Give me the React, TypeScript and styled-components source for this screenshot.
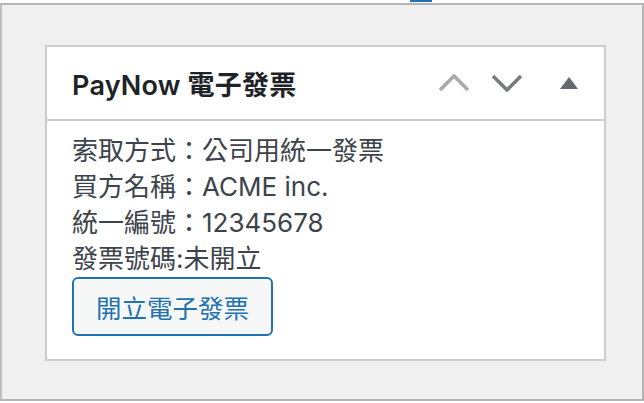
import React from 'react';
import styled, { createGlobalStyle } from 'styled-components';

const GlobalStyle = createGlobalStyle`
	body {
		margin: 0;
		background: #fff;
		font-family: Inter, 'Noto Sans CJK TC', sans-serif;
	}
	* {
		box-sizing: border-box;
	}
`;

const Page = styled.div`
	width: 644px;
	height: 403px;
`;

const TopStrip = styled.div`
	display: flex;
	height: 3px;
`;

const FocusTab = styled.div`
	margin-left: 410px;
	width: 22px;
	height: 2px;
	background: #2271b1;
`;

const Frame = styled.div`
	height: 398px;
	padding: 40px 36px 36px 43px;
	background: #f0f0f1;
	border: 2px solid #b4b4b4;
	border-left-color: #bfc0c3;
`;

const Card = styled.div`
	background: #fff;
	border: 2px solid #cbcdd1;
`;

const CardHeader = styled.div`
	display: flex;
	align-items: center;
	height: 74px;
	padding-left: 25px;
	border-bottom: 2px solid #cbcdd1;
`;

const Title = styled.h2`
	flex: 1;
	margin: 0;
	font-size: 27px;
	font-weight: 600;
	color: #1d2327;
	letter-spacing: 0.2px;
`;

const HandleButton = styled.button<{ $width: number }>`
	display: flex;
	align-items: center;
	justify-content: center;
	width: ${(p) => p.$width}px;
	height: 72px;
	padding: 0;
	border: none;
	background: none;
`;

const Body = styled.div`
	padding: 12px 25px 23px 25px;
	color: #3c434a;
	font-size: 26px;
	line-height: 36px;
`;

const Line = styled.div`
	white-space: nowrap;
`;

const IssueButton = styled.button`
	display: inline-flex;
	align-items: center;
	height: 59px;
	padding: 0 22px;
	border: 2px solid #2271b1;
	border-radius: 6px;
	background: #f6f7f7;
	color: #2271b1;
	font-family: inherit;
	font-size: 25.5px;
`;

const Chevron = ({ up, color }: { up?: boolean; color: string }) => (
	<svg width="30" height="18" viewBox="0 0 30 18">
		<polyline
			points={up ? '1,16 15,2 29,16' : '1,2 15,16 29,2'}
			fill="none"
			stroke={color}
			strokeWidth="3.6"
		/>
	</svg>
);

const Triangle = () => (
	<svg width="18" height="12" viewBox="0 0 18 12">
		<polygon points="9,0 18,12 0,12" fill="#646970" />
	</svg>
);

export default function App() {
	return (
		<Page>
			<GlobalStyle />
			<TopStrip>
				<FocusTab />
			</TopStrip>
			<Frame>
				<Card>
					<CardHeader>
						<Title>PayNow 電子發票</Title>
						<HandleButton $width={52}>
							<Chevron up color="#a7aaad" />
						</HandleButton>
						<HandleButton $width={54}>
							<Chevron color="#787c82" />
						</HandleButton>
						<HandleButton $width={70}>
							<Triangle />
						</HandleButton>
					</CardHeader>
					<Body>
						<Line>索取方式：公司用統一發票</Line>
						<Line>買方名稱：ACME inc.</Line>
						<Line>統一編號：12345678</Line>
						<Line>發票號碼:未開立</Line>
						<IssueButton>開立電子發票</IssueButton>
					</Body>
				</Card>
			</Frame>
		</Page>
	);
}
